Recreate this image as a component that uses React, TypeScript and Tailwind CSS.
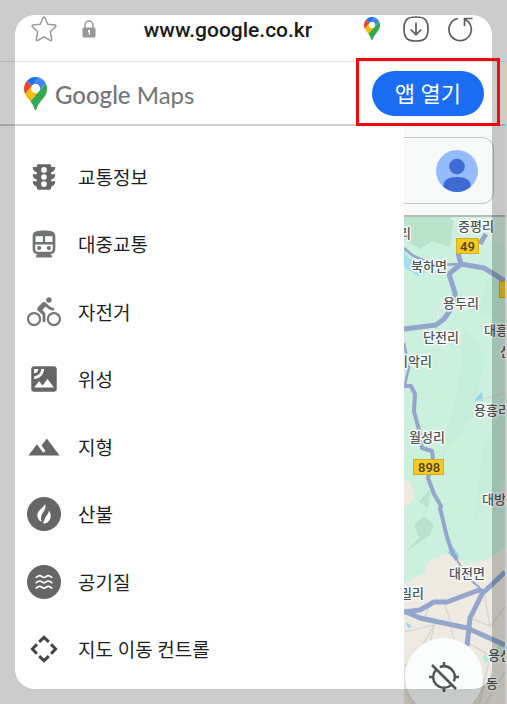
import type { ReactNode } from "react";
import { MdDirectionsBike, MdSatellite, MdTerrain, MdTraffic } from "react-icons/md";

const korean = "font-['Roboto','Noto_Sans_CJK_KR',sans-serif]";

function Pin({ className }: { className: string }) {
  return (
    <svg viewBox="0 0 92.3 132.3" className={className} aria-hidden="true">
      <path fill="#1a73e8" d="M60.2 2.2C55.8.8 51 0 46.1 0 32 0 19.3 6.4 10.8 16.5l21.8 18.3L60.2 2.2z" />
      <path fill="#ea4335" d="M10.8 16.5C4.1 24.5 0 34.9 0 46.1c0 8.7 1.7 15.7 4.6 22l28-33.3-21.8-18.3z" />
      <path fill="#4285f4" d="M46.2 28.5c9.8 0 17.7 7.9 17.7 17.7 0 4.3-1.6 8.3-4.2 11.4 0 0 13.9-16.6 27.5-32.7-5.6-10.8-15.3-19-27-22.7L32.6 34.8c3.3-3.8 8.1-6.3 13.6-6.3" />
      <path fill="#fbbc04" d="M46.2 63.8c-9.8 0-17.7-7.9-17.7-17.7 0-4.3 1.5-8.3 4.1-11.3l-28 33.3c4.8 10.6 12.8 19.2 21 29.9l34.1-40.5c-3.3 3.9-8.1 6.3-13.5 6.3" />
      <path fill="#34a853" d="M59.1 109.2c15.4-24.1 33.3-35 33.3-63 0-7.7-1.9-14.9-5.2-21.3L25.6 98c2.6 3.4 5.3 7.3 7.9 11.3 9.4 14.5 6.8 23.1 12.8 23.1s3.4-8.7 12.8-23.2" />
      <circle cx="46.2" cy="46.2" r="17.7" fill="#fff" />
    </svg>
  );
}

function TrainIcon() {
  return (
    <svg viewBox="0 0 24 24" className="size-full" aria-hidden="true">
      <path fill="#717375" d="M12 2.4c-5 0-8 .6-8 4v9.3C4 17.700 5.500 19.200 7.500 19.200L6.300 20.300v1.300h11.400v-1.300l-1.200-1.100c2 0 3.500-1.500 3.500-3.500V6.400c0-3.400-3-4-8-4z" />
      <path fill="#fff" d="M6 6.600h5.200v4H6zM12.800 6.600H18v4h-5.200zM5.800 12.400h12.400v3.100c0 1.200-.8 2-2.100 2H7.900c-1.300 0-2.100-.8-2.100-2z" />
      <circle cx="8.600" cy="14.900" r="1.500" fill="#717375" />
      <circle cx="15.400" cy="14.900" r="1.500" fill="#717375" />
    </svg>
  );
}

function FireIcon() {
  return (
    <svg viewBox="0 0 34 34" className="size-full" aria-hidden="true">
      <circle cx="17" cy="17" r="17" fill="#666" />
      <path fill="#fff" d="M18.200 7c.8 3.400-.2 5.600-2.200 8.500-2 2.900-2.700 5.600-1.300 9.300-2.800-1.300-4.400-3.600-4.400-6.600 0-4.900 5.300-6.300 7.900-11.200z" />
      <path fill="#fff" d="M22 13.300c2.500 4.300 2.400 9.400-1.600 12.200-1.400.9-3 1.100-4.500.8 1.200-1.900 1.200-3 2.100-5 1.200-2.700 3.500-3.900 4-8z" />
    </svg>
  );
}

function AirIcon() {
  const wave = "c1.800 0 2.200-1.800 4.200-1.800s2.400 1.800 4.300 1.800 2.300-1.800 4.300-1.800 2.400 1.800 4.200 1.800";
  return (
    <svg viewBox="0 0 34 34" className="size-full" aria-hidden="true">
      <circle cx="17" cy="17" r="17" fill="#666" />
      <g fill="none" stroke="#fff" strokeWidth="1.700">
        {[12.500, 17.800, 23.100].map((y) => (
          <path key={y} d={`M8.500 ${y}${wave}`} />
        ))}
      </g>
    </svg>
  );
}

function MoveIcon() {
  return (
    <svg viewBox="0 0 34 34" className="size-full" fill="none" stroke="#444" strokeWidth="3" aria-hidden="true">
      <path d="M12.200 9.900 17 5.400l4.800 4.500M12.200 24.100 17 28.600l4.800-4.500M9.900 12.200 5.400 17l4.500 4.800M24.100 12.200 28.600 17l-4.500 4.800" />
    </svg>
  );
}

const layers: { label: string; icon: ReactNode }[] = [
  { label: "교통정보", icon: <MdTraffic className="size-full" /> },
  { label: "대중교통", icon: <TrainIcon /> },
  { label: "자전거", icon: <MdDirectionsBike className="size-full text-[#757575]" /> },
  { label: "위성", icon: <MdSatellite className="size-full" /> },
  { label: "지형", icon: <MdTerrain className="size-full" /> },
  { label: "산불", icon: <FireIcon /> },
  { label: "공기질", icon: <AirIcon /> },
  { label: "지도 이동 컨트롤", icon: <MoveIcon /> },
];

function BrowserBar() {
  return (
    <div className="flex h-[62px] shrink-0 items-center border-b border-[#e3e3e3] pr-8 pb-1 pl-[31px]">
      <button type="button" aria-label="즐겨찾기">
        <svg viewBox="0 0 26 26" className="size-[26px]" fill="none" stroke="#999" strokeWidth="1.500" strokeLinejoin="round">
          <path d="M12.200 1.500c.3-.7 1.300-.7 1.600 0l3 6.700 7.300.8c.8.1 1.100 1 .5 1.600l-5.300 5.100 1.500 7.800c.2.800-.6 1.400-1.300 1L13 20.800l-6.500 3.700c-.7.400-1.500-.2-1.300-1l1.500-7.800-5.300-5.100c-.6-.6-.3-1.500.5-1.600l7.300-.8z" />
        </svg>
      </button>
      <svg viewBox="0 0 14 18" className="ml-[25px] h-[18px] w-[14px]" aria-hidden="true">
        <path d="M3 8V5a4 4 0 0 1 8 0v3" fill="none" stroke="#999" strokeWidth="1.500" />
        <rect x=".5" y="7.500" width="13" height="10" rx="1.500" fill="#999" />
        <path d="M6 10h2v4.500H6.800V12H6z" fill="#fff" />
      </svg>
      <input
        aria-label="주소"
        readOnly
        value="www.google.co.kr"
        className="min-w-0 flex-1 bg-transparent pt-0.5 pr-1 text-center font-['Roboto',sans-serif] text-[21px] leading-7 font-medium text-[#1c1c1c] outline-none"
      />
      <Pin className="h-[23px] w-4" />
      <button type="button" aria-label="다운로드" className="ml-[23px]">
        <svg viewBox="0 0 26 26" className="size-[26px]" fill="none" stroke="#5c5c5c" strokeWidth="1.700">
          <path d="M13 1c9 0 12 3 12 12s-3 12-12 12S1 22 1 13 4 1 13 1zM13 6.500v12.200M7.700 13.500l5.300 5.300 5.300-5.300" />
        </svg>
      </button>
      <button type="button" aria-label="새로고침" className="ml-[18px]">
        <svg viewBox="0 0 26 26" className="size-[26px]" fill="none" stroke="#5c5c5c" strokeWidth="1.700">
          <path d="M10.800 2.500A11.200 11.200 0 1 0 22 6.600L17.500 2.500M17.500 10V2.500h8" />
        </svg>
      </button>
    </div>
  );
}

function Header() {
  return (
    <header className="flex h-16 shrink-0 items-center justify-between border-b-2 border-[#d0d0d0] pr-[21px] pl-6">
      <a href="#maps" className="flex items-center gap-2 font-['Lato',sans-serif] text-[24px] leading-8 text-[#757575]">
        <Pin className="h-[33px] w-[23px]" />
        <span className="pt-1">
          <span className="font-medium">Google</span> Maps
        </span>
      </a>
      <div className="relative">
        <button type="button" className={`h-[45px] rounded-full bg-[#1b6ef3] px-[23px] pt-1 text-[22px] leading-8 text-white ${korean}`}>
          앱 열기
        </button>
        <span className="pointer-events-none absolute -top-[13px] -right-4 -bottom-[10px] -left-4 z-20 border-3 border-[#f00a0a]" />
      </div>
    </header>
  );
}

const places: [string, number, number][] = [
  ["리", -5, 21],
  ["중평리", 54, 14],
  ["북하면", 7, 54],
  ["용두리", 39, 91],
  ["단전리", 19, 125],
  ["대흥리", 80, 118],
  ["산", 96, 139],
  ["이악리", -8, 149],
  ["용흥리", 70, 198],
  ["월성리", 5, 225],
  ["대방", 78, 287],
  ["대전면", 45, 361],
  ["밀리", -4, 381],
  ["용산", 84, 443],
  ["동", 82, 471],
];

function MapCanvas() {
  return (
    <svg viewBox="0 0 101 488" preserveAspectRatio="xMinYMin slice" className="size-full" role="img" aria-label="지도">
      <rect width="101" height="488" fill="#cbf0de" />
      <path d="M0 0h50l-4 30-18-6-12 8L0 22z" fill="#b7e4cb" />
      <path d="M84 60l17 8v40l-26-14zM60 110l22 30-14 60-30 40 20-90zM101 190v70l-30 40 8-70z" fill="#c4eed9" />
      <path d="M45 0h56v30L70 22z" fill="#d6f1e3" />
      <path d="M0 34c6 12 12 10 20 14l3 7-10 4L0 50z" fill="#a5dff0" />
      <path d="M0 262c7 3 12 12 9 22L0 290zM0 366l20-10 6-13 20-7 17 12 25-8 13-9v157H0z" fill="#eeeae1" />
      <path d="M3 334l12-14-5-12 10-9 10 9-4 10zM24 291l-9-6 12-14z" fill="#b8e3cc" />
      <path d="M44 336l5-6 6 8-3 5zM72 181l6-6 1 9h-8zM2 405l6 5-4 1z" fill="#8ed5ee" />
      <path d="M78 440l23-16v12l-20 10z" fill="#b9ead0" />
      <g fill="none" stroke="#d9d8d5" strokeWidth="1.500">
        <path d="M0 415l30-7-14 25 30-6M20 401l8-16M30 408l-8 40M66 401l20 8M80 375l6 34M47 411l6 24M40 385l8 24M63 425l30 18M101 390l-15 20M73 184l28-8" />
        <path d="M0 448h20M85 445l-10 43M101 455l-20 33" />
      </g>
      <path d="M36 107c-6-15 4-20 12-22" fill="none" stroke="#dfeeea" strokeWidth="1.500" />
      <g fill="none" stroke="#94a6cd" strokeLinejoin="round">
        <path strokeWidth="2.500" d="M0 31l8 7 13 6 12 4 24-1M0 126l5 24-4 18" />
        <path strokeWidth="5" d="M82 17l-6 10M54 36l3 11-12 10 6 19v10L40 102l-8 6-32 4M57 47l23 4 21 13" />
        <path strokeWidth="4" d="M0 169h7l4 8-1 17 6 23 2 14 10 3 1 8-5 19 6 16 7 12-1 2 7 29 5 15 5 8" />
        <path strokeWidth="2" d="M53 343l10 17 13 11" />
        <path strokeWidth="5" d="M0 395l16-2 14-8h13l32-12 5 2 21-20M0 394l16 7 47 10 38 17M79 375l-13 26-3 28" />
      </g>
      <g fill="#f5ca20" stroke="#d9ad1b">
        <rect x="52.500" y="21.500" width="22" height="15" />
        <rect x="9.500" y="242.500" width="30" height="15" />
        <rect x="95.500" y="64.500" width="22" height="16" />
      </g>
      <g className="font-['Roboto',sans-serif] text-[13px] font-medium" fill="#4a4526">
        <text x="56" y="34">49</text>
        <text x="14" y="255">898</text>
      </g>
      <g className={`text-[13px] font-medium ${korean}`} fill="#505656" stroke="#f4faf7" strokeWidth="3" strokeLinejoin="round" paintOrder="stroke">
        {places.map(([name, x, y]) => (
          <text key={name + y} x={x} y={y}>
            {name}
          </text>
        ))}
      </g>
    </svg>
  );
}

function MapColumn() {
  return (
    <section className="relative flex w-[101px] shrink-0 flex-col overflow-hidden">
      <div className="shrink-0 border-b-2 border-[#b4bcba] bg-[#f8fafa] pt-[11px] pr-[11px] pb-[11px]">
        <div className="flex h-[67px] items-center justify-end rounded-r-xl border border-l-0 border-[#c3c7c7] pr-[15px]">
          <button type="button" aria-label="계정">
            <svg viewBox="0 0 42 42" className="size-[42px]">
              <circle cx="21" cy="21" r="21" fill="#94bbfa" />
              <circle cx="21" cy="16.500" r="7.800" fill="#3c6bd3" />
              <path d="M7.500 37c-1-7 5-10 13.500-10s14.500 3 13.500 10C30 40.500 26 42 21 42S12 40.500 7.500 37z" fill="#3c6bd3" />
            </svg>
          </button>
        </div>
      </div>
      <div className="min-h-0 flex-1">
        <MapCanvas />
      </div>
      <button
        type="button"
        aria-label="내 위치"
        className="absolute right-[22px] -bottom-3 flex size-[78px] items-center justify-center rounded-full bg-[#fbfcfc] shadow-md"
      >
        <svg viewBox="0 0 32 32" className="size-8" fill="none" stroke="#555" strokeWidth="2.500">
          <path d="M11.800 6.100A10.800 10.800 0 0 1 25.900 20.200M22.800 24.400A10.800 10.800 0 0 1 7.600 9.200M16 1v4.500M16 26.500V31M1 16h4.500M26.500 16H31M4 4l24 24" />
        </svg>
      </button>
    </section>
  );
}

export default function App() {
  return (
    <div className="relative flex h-screen flex-col overflow-hidden bg-white pr-0.5">
      <BrowserBar />
      <Header />
      <main className="flex min-h-0 flex-1">
        <nav aria-label="지도 레이어" className="flex-1">
          <ul className="grid h-full grid-rows-8 pt-[17px] pb-[21px]">
            {layers.map(({ label, icon }) => (
              <li key={label} className="flex">
                <button type="button" className={`flex flex-1 items-center gap-[17px] pl-[27px] text-left text-[19px] leading-7 text-[#1f1f1f] ${korean}`}>
                  <span className="size-[34px] text-[#666]">{icon}</span>
                  <span className="pt-1">{label}</span>
                </button>
              </li>
            ))}
          </ul>
        </nav>
        <MapColumn />
      </main>
      <div className="pointer-events-none absolute inset-[15px] z-10 rounded-[20px] shadow-[0_0_0_40px_rgba(0,0,0,0.2)]" />
    </div>
  );
}
